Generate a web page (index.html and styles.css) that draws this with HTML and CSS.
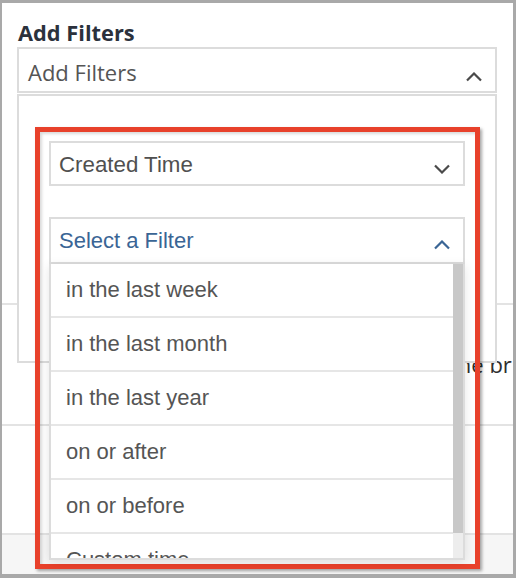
FILE: index.html
```
<!DOCTYPE html>
<html lang="en">
<head>
<meta charset="utf-8">
<title>Add Filters</title>
<link rel="stylesheet" href="styles.css">
</head>
<body>
<div class="frame">
  <div class="header">
    <h2 class="title">Add Filters</h2>
    <div class="dropdown">
      <div class="dd-toggle">
        <span class="dd-label">Add Filters</span>
        <svg class="chev chev-toggle" width="16" height="10" viewBox="0 0 16 10"><polyline points="1,8.5 8,1.5 15,8.5" fill="none" stroke="#4a4a4a" stroke-width="2.2"/></svg>
      </div>
      <div class="dd-panel"></div>
    </div>
  </div>
  <div class="rows">
    <div class="row row-1"></div>
    <div class="row row-2"><p class="row-text">the br</p></div>
    <div class="row row-3"></div>
    <div class="footer"></div>
  </div>
  <div class="highlight">
    <div class="select">
      <span class="select-label">Created Time</span>
      <svg class="chev chev-select" width="16" height="10" viewBox="0 0 16 10"><polyline points="1,1.5 8,8.5 15,1.5" fill="none" stroke="#4a4a4a" stroke-width="2.2"/></svg>
    </div>
    <div class="combo">
      <div class="combo-head">
        <span class="combo-label">Select a Filter</span>
        <svg class="chev chev-combo" width="16" height="10" viewBox="0 0 16 10"><polyline points="1,8.5 8,1.5 15,8.5" fill="none" stroke="#3a6595" stroke-width="2.2"/></svg>
      </div>
      <div class="combo-list">
        <ul class="options">
          <li>in the last week</li>
          <li>in the last month</li>
          <li>in the last year</li>
          <li>on or after</li>
          <li>on or before</li>
          <li>Custom time</li>
        </ul>
        <div class="scrollbar"><div class="thumb"></div></div>
      </div>
    </div>
  </div>
</div>
</body>
</html>
```
FILE: styles.css
```
html, body {
  margin: 0;
  padding: 0;
  background: #fff;
}
.frame {
  position: relative;
  width: 516px;
  height: 578px;
  box-sizing: border-box;
  border-style: solid;
  border-color: #a9a9a9;
  border-width: 3px 3px 4px 2px;
  overflow: hidden;
  background: #fff;
  display: flex;
  flex-direction: column;
}
.header {
  padding: 15px 16px 0 15px;
}
.title {
  margin: 0 0 0 1px;
  font: 700 21.8px/29px "Open Sans", sans-serif;
  color: #2b313c;
}
.dropdown {
  position: relative;
}
.dd-toggle {
  height: 46px;
  box-sizing: border-box;
  border: 2px solid #dcdcdc;
  padding: 4px 13px 0 9px;
  display: flex;
  justify-content: space-between;
  align-items: flex-start;
  background: #fff;
}
.dd-label {
  font: 400 22px/38px "Open Sans", sans-serif;
  color: #555;
}
.chev {
  display: block;
  flex-shrink: 0;
}
.chev-toggle { margin-top: 18.6px; }
.dd-panel {
  position: absolute;
  left: 0;
  right: 0;
  top: 100%;
  margin-top: 1px;
  height: 269px;
  box-sizing: border-box;
  border: 2px solid #dcdcdc;
  background: #fff;
}
.rows {
  flex: 1;
  display: flex;
  flex-direction: column;
}
.row {
  border-bottom: 2px solid #e3e3e3;
  flex-shrink: 0;
}
.row-1 { height: 210px; }
.row-2 { height: 119px; }
.row-3 { height: 107px; }
.row-text {
  margin: 0;
  padding: 44px 0 0 448px;
  font: 400 22px/30px "Open Sans", sans-serif;
  color: #2e2e2e;
  white-space: nowrap;
}
.footer {
  flex: 1;
  background: #f6f6f6;
}
.highlight {
  position: absolute;
  left: 33px;
  top: 124px;
  width: 445px;
  height: 442px;
  box-sizing: border-box;
  border: 5px solid #e8412b;
  padding: 9px 10px 4px 9px;
  display: flex;
  flex-direction: column;
  box-shadow: 2px 2px 3px rgba(0,0,0,0.35), inset 2px 2px 3px rgba(0,0,0,0.15);
}
.select {
  height: 45px;
  box-sizing: border-box;
  border: 2px solid #dcdcdc;
  background: #fff;
  display: flex;
  justify-content: space-between;
  align-items: flex-start;
  padding: 2px 13px 0 8px;
  flex-shrink: 0;
}
.select-label {
  font: 400 22.3px/39px "Liberation Sans", Arial, sans-serif;
  color: #505050;
}
.chev-select { margin-top: 18.6px; }
.combo {
  margin-top: 31px;
  display: flex;
  flex-direction: column;
}
.combo-head {
  height: 47px;
  box-sizing: border-box;
  border: 2px solid #dcdcdc;
  background: #fff;
  display: flex;
  justify-content: space-between;
  align-items: flex-start;
  padding: 1px 13px 0 8px;
}
.combo-label {
  font: 400 22px/42px "Liberation Sans", Arial, sans-serif;
  color: #3a6595;
}
.chev-combo { margin-top: 20.3px; }
.combo-list {
  height: 296px;
  box-sizing: border-box;
  border: 2px solid #dcdcdc;
  border-top: 0;
  background: #fff;
  display: flex;
  overflow: hidden;
  box-shadow: 0 2px 10px rgba(0,0,0,0.1);
}
.options {
  flex: 1;
  list-style: none;
  margin: 0;
  padding: 0;
  overflow: hidden;
}
.options li {
  height: 54px;
  box-sizing: border-box;
  border-bottom: 2px solid #e6e6e6;
  padding-left: 15px;
  font: 400 22px/52px "Liberation Sans", Arial, sans-serif;
  color: #555;
}
.scrollbar {
  width: 10px;
  flex-shrink: 0;
  background: #ededed;
}
.thumb {
  height: 269px;
  background: #c8c8c8;
}
```
